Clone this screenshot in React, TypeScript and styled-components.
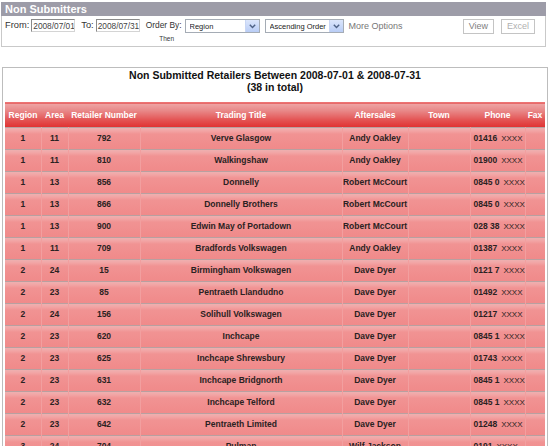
import React from 'react'
import styled, { createGlobalStyle } from 'styled-components'

const GlobalStyle = createGlobalStyle`
  body {
    margin: 0;
    background: #fff;
    font-family: "Liberation Sans", Arial, sans-serif;
    color: #333;
  }
`

const Page = styled.div`
  width: 550px;
  padding: 2px 0 0 1px;
  box-sizing: border-box;
`

const TopPanel = styled.div`
  width: 545px;
  border: 1px solid #c9c9c9;
  border-top: none;
  box-sizing: border-box;
`

const PanelTitle = styled.div`
  height: 14px;
  line-height: 14px;
  background: #9d9ca8;
  color: #fff;
  font-weight: bold;
  font-size: 11px;
  padding-left: 4px;
  margin: 0 -1px;
`

const FilterRow = styled.div`
  display: flex;
  align-items: flex-start;
  height: 30px;
  padding: 3px 0 0 3px;
  box-sizing: border-box;
  font-size: 9.3px;
`

const Label = styled.span<{ $narrow?: boolean }>`
  line-height: 13px;
  margin-right: 2px;
  white-space: nowrap;
  font-size: ${p => (p.$narrow ? '8.4px' : 'inherit')};
`

const DateInput = styled.div`
  width: 44px;
  height: 13px;
  line-height: 12px;
  box-sizing: border-box;
  border: 1px solid #8a8a8a;
  border-right-color: #d4d4d4;
  border-bottom-color: #d4d4d4;
  font-size: 8.3px;
  color: #444;
  padding-left: 1px;
  margin-right: 6px;
  white-space: nowrap;
  overflow: hidden;
`

const OrderBy = styled.div`
  display: flex;
  flex-direction: column;
  align-items: center;
  margin-right: 1px;
`

const Then = styled.span`
  font-size: 6.5px;
  margin-top: 3px;
  margin-left: 4px;
`

const Select = styled.div<{ $w: number }>`
  display: flex;
  align-items: center;
  width: ${p => p.$w}px;
  height: 14px;
  box-sizing: border-box;
  border: 1px solid #a5acb5;
  font-size: 7.5px;
  color: #222;
  padding-left: 4px;
  margin-right: 5px;
  span {
    flex: 1;
    white-space: nowrap;
    overflow: hidden;
  }
`

const Arrow = styled.div`
  width: 13px;
  height: 12px;
  background: linear-gradient(#dce6fb, #b9cdf6);
  border-left: 1px solid #c8d6f4;
  display: flex;
  align-items: center;
  justify-content: center;
`

const MoreOptions = styled.span`
  color: #777;
  font-size: 9px;
  line-height: 14px;
`

const Spacer = styled.div`
  flex: 1;
`

const Button = styled.div<{ $disabled?: boolean }>`
  height: 15px;
  line-height: 13px;
  box-sizing: border-box;
  border: 1px solid #c4c4c4;
  padding: 0 5px;
  font-size: 9px;
  color: ${p => (p.$disabled ? '#b0b0b0' : '#808080')};
  margin-right: 7px;
  &:last-child {
    margin-right: 10px;
  }
`

const ResultsPanel = styled.div`
  margin: 20px 0 0 1px;
  width: 546px;
  border: 1px solid #bdbdbd;
  box-sizing: border-box;
  padding: 0 2px;
`

const ReportTitle = styled.div`
  text-align: center;
  font-weight: bold;
  font-size: 10.5px;
  line-height: 12px;
  color: #111;
  padding: 1px 0 9px;
`

const Table = styled.table`
  width: 100%;
  border-collapse: collapse;
  table-layout: fixed;
  background: #f08a8a;
  border-top: 1px solid #ec7474;
  font-size: 8.5px;
  font-weight: bold;
`

const Th = styled.th<{ $w: number }>`
  width: ${p => p.$w}px;
  height: 24px;
  padding: 0;
  color: #fff;
  font-size: 8.5px;
  text-align: center;
  white-space: nowrap;
  background: linear-gradient(#efa6a6 0%, #e88888 30%, #e35252 70%, #e03030 100%);
`

const Tr = styled.tr`
  background: linear-gradient(#b8a0a0 0, #b8a0a0 1px, #eeb0b0 1px, #f2a4a4 4px, #f19393 7px, #f08a8a 100%);
`

const Td = styled.td`
  height: 22px;
  padding: 0;
  text-align: center;
  color: #2a2222;
  white-space: nowrap;
  overflow: hidden;
  border-left: 1px solid rgba(255, 255, 255, 0.18);
  &:first-child {
    border-left: none;
  }
`

const PhoneCell = styled(Td)`
  text-align: left;
  padding-left: 3px;
`

const Masked = styled.span`
  font-weight: normal;
  font-size: 8px;
  margin-left: 4px;
`

const columns = [
  { title: 'Region', w: 36 },
  { title: 'Area', w: 27 },
  { title: 'Retailer Number', w: 72 },
  { title: 'Trading Title', w: 202 },
  { title: 'Aftersales', w: 66 },
  { title: 'Town', w: 62 },
  { title: 'Phone', w: 55 },
  { title: 'Fax', w: 20 },
]

const rows: [number, number, number, string, string, string][] = [
  [1, 11, 792, 'Verve Glasgow', 'Andy Oakley', '01416'],
  [1, 11, 810, 'Walkingshaw', 'Andy Oakley', '01900'],
  [1, 13, 856, 'Donnelly', 'Robert McCourt', '0845 0'],
  [1, 13, 866, 'Donnelly Brothers', 'Robert McCourt', '0845 0'],
  [1, 13, 900, 'Edwin May of Portadown', 'Robert McCourt', '028 38'],
  [1, 11, 709, 'Bradfords Volkswagen', 'Andy Oakley', '01387'],
  [2, 24, 15, 'Birmingham Volkswagen', 'Dave Dyer', '0121 7'],
  [2, 23, 85, 'Pentraeth Llandudno', 'Dave Dyer', '01492'],
  [2, 24, 156, 'Solihull Volkswagen', 'Dave Dyer', '01217'],
  [2, 23, 620, 'Inchcape', 'Dave Dyer', '0845 1'],
  [2, 23, 625, 'Inchcape Shrewsbury', 'Dave Dyer', '01743'],
  [2, 23, 631, 'Inchcape Bridgnorth', 'Dave Dyer', '0845 1'],
  [2, 23, 632, 'Inchcape Telford', 'Dave Dyer', '0845 1'],
  [2, 23, 642, 'Pentraeth Limited', 'Dave Dyer', '01248'],
  [3, 24, 704, 'Pulman', 'Wilf Jackson', '0191'],
]

const Chevron = () => (
  <svg width="7" height="5" viewBox="0 0 7 5">
    <path d="M0.8 0.8 L3.5 3.6 L6.2 0.8" fill="none" stroke="#4d6185" strokeWidth="1.4" />
  </svg>
)

const App = () => (
  <Page>
    <GlobalStyle />
    <TopPanel>
      <PanelTitle>Non Submitters</PanelTitle>
      <FilterRow>
        <Label>From:</Label>
        <DateInput>2008/07/01</DateInput>
        <Label>To:</Label>
        <DateInput>2008/07/31</DateInput>
        <OrderBy>
          <Label $narrow>Order By:</Label>
          <Then>Then</Then>
        </OrderBy>
        <Select $w={75}>
          <span>Region</span>
          <Arrow><Chevron /></Arrow>
        </Select>
        <Select $w={79}>
          <span>Ascending Order</span>
          <Arrow><Chevron /></Arrow>
        </Select>
        <MoreOptions>More Options</MoreOptions>
        <Spacer />
        <Button>View</Button>
        <Button $disabled>Excel</Button>
      </FilterRow>
    </TopPanel>

    <ResultsPanel>
      <ReportTitle>
        Non Submitted Retailers Between 2008-07-01 &amp; 2008-07-31
        <br />
        (38 in total)
      </ReportTitle>
      <Table>
        <thead>
          <tr>
            {columns.map(c => (
              <Th key={c.title} $w={c.w}>{c.title}</Th>
            ))}
          </tr>
        </thead>
        <tbody>
          {rows.map(r => (
            <Tr key={r[2]}>
              <Td>{r[0]}</Td>
              <Td>{r[1]}</Td>
              <Td>{r[2]}</Td>
              <Td>{r[3]}</Td>
              <Td>{r[4]}</Td>
              <Td></Td>
              <PhoneCell>
                {r[5]}
                <Masked>XXXX</Masked>
              </PhoneCell>
              <Td></Td>
            </Tr>
          ))}
        </tbody>
      </Table>
    </ResultsPanel>
  </Page>
)

export default App
